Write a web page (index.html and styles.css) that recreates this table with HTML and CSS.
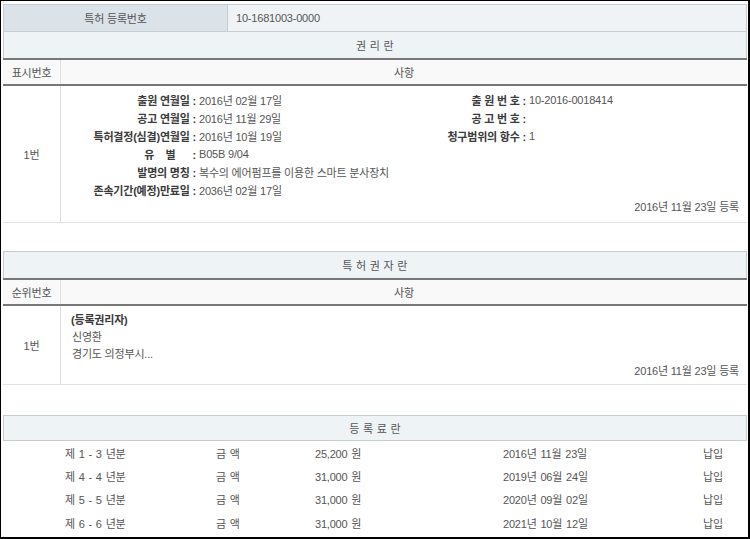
FILE: index.html
```html
<!DOCTYPE html>
<html lang="ko">
<head>
<meta charset="utf-8">
<title>특허 등록원부</title>
<link rel="stylesheet" href="styles.css">
</head>
<body>
<div class="frame">
  <div class="regno">
    <div class="regno-key">특허 등록번호</div>
    <div class="regno-val">10-1681003-0000</div>
  </div>
  <div class="sec-title">권 리 란</div>
  <div class="colhead">
    <div class="c1">표시번호</div>
    <div class="c2">사항</div>
  </div>
  <div class="body-row rights">
    <div class="c1">1번</div>
    <div class="c2">
      <div class="info">
        <div class="lbl">출원 연월일 :</div><div class="val">2016년 02월 17일</div>
        <div class="lbl">출 원 번 호 :</div><div class="val">10-2016-0018414</div>
        <div class="lbl">공고 연월일 :</div><div class="val">2016년 11월 29일</div>
        <div class="lbl">공 고 번 호 :</div><div class="val"></div>
        <div class="lbl">특허결정(심결)연월일 :</div><div class="val">2016년 10월 19일</div>
        <div class="lbl">청구범위의 항수 :</div><div class="val">1</div>
        <div class="lbl">유&nbsp;&nbsp;&nbsp;&nbsp;별&nbsp;&nbsp;&nbsp;&nbsp;&nbsp;&nbsp;:</div><div class="val wide">B05B 9/04</div>
        <div class="lbl">발명의 명칭 :</div><div class="val wide">복수의 에어펌프를 이용한 스마트 분사장치</div>
        <div class="lbl">존속기간(예정)만료일 :</div><div class="val wide">2036년 02월 17일</div>
      </div>
      <div class="reg">2016년 11월 23일 등록</div>
    </div>
  </div>

  <div class="sec-title sec-gap">특 허 권 자 란</div>
  <div class="colhead">
    <div class="c1">순위번호</div>
    <div class="c2">사항</div>
  </div>
  <div class="body-row holder">
    <div class="c1">1번</div>
    <div class="c2">
      <div class="holder-kind">(등록권리자)</div>
      <div class="holder-line">신영환</div>
      <div class="holder-line">경기도 의정부시...</div>
      <div class="reg">2016년 11월 23일 등록</div>
    </div>
  </div>

  <div class="sec-title fee-title">등 록 료 란</div>
  <div class="fees">
    <div class="fee-row"><span>제 1 - 3 년분</span><span>금 액</span><span>25,200 원</span><span>2016년 11월 23일</span><span>납입</span></div>
    <div class="fee-row"><span>제 4 - 4 년분</span><span>금 액</span><span>31,000 원</span><span>2019년 06월 24일</span><span>납입</span></div>
    <div class="fee-row"><span>제 5 - 5 년분</span><span>금 액</span><span>31,000 원</span><span>2020년 09월 02일</span><span>납입</span></div>
    <div class="fee-row"><span>제 6 - 6 년분</span><span>금 액</span><span>31,000 원</span><span>2021년 10월 12일</span><span>납입</span></div>
  </div>
</div>
</body>
</html>
```
FILE: styles.css
```css
* { box-sizing: border-box; }
html, body { margin: 0; padding: 0; background: #fff; }
body {
  font-family: "Liberation Sans", "Noto Sans CJK KR", sans-serif;
  font-size: 11px;
  letter-spacing: -0.2px;
  color: #555;
}
.frame {
  width: 750px;
  height: 539px;
  overflow: hidden;
  border: 1px solid #000;
  border-right-width: 2px;
  border-bottom-width: 2px;
  padding: 3px 1px 0 2px;
}
.regno {
  display: flex;
  height: 28px;
  border: 1px solid #c5ced3;
}
.regno-key {
  width: 224px;
  background: #dce3e8;
  border-right: 1px solid #c5ced3;
  display: flex;
  align-items: center;
  justify-content: center;
  color: #555;
}
.regno-val {
  flex: 1;
  background: #eff3f5;
  display: flex;
  align-items: center;
  padding-left: 8px;
  color: #555;
}
.sec-title {
  height: 26px;
  background: #eef3f6;
  border-left: 1px solid #c5ced3;
  border-right: 1px solid #c5ced3;
  display: flex;
  align-items: center;
  justify-content: center;
  color: #555;
  letter-spacing: 0.3px;
}
.sec-gap {
  margin-top: 28px;
  height: 27px;
  border-top: 1px solid #c5ced3;
}
.colhead {
  display: flex;
  height: 28px;
  background: #f9f9f9;
  border-top: 2px solid #777;
  border-bottom: 2px solid #777;
}
.colhead .c1, .colhead .c2 {
  display: flex;
  align-items: center;
  justify-content: center;
}
.c1 {
  width: 58px;
  flex: none;
  border-right: 1px solid #ddd;
}
.c2 { flex: 1; }
.body-row {
  display: flex;
  border-bottom: 1px solid #e2e2e2;
  color: #444;
}
.body-row .c1 {
  display: flex;
  align-items: center;
  justify-content: center;
  color: #555;
}
.rights { height: 137px; }
.rights .c2 { padding: 5px 8px 0 0; }
.info {
  display: grid;
  grid-template-columns: 135px 195px 129px 1fr;
  column-gap: 3px;
  grid-auto-rows: 18px;
  align-items: center;
}
.lbl {
  text-align: right;
  font-weight: bold;
  color: #3a3a3a;
  white-space: nowrap;
}
.val { white-space: nowrap; color: #555; }
.val.wide { grid-column: 2 / 5; }
.reg {
  text-align: right;
  line-height: 17px;
  color: #555;
}
.holder { height: 79px; }
.holder .c2 { padding: 6px 8px 0 10px; line-height: 17px; }
.holder-kind { font-weight: bold; color: #3a3a3a; }
.holder-line { padding-left: 1px; color: #555; }
.fee-title {
  margin-top: 30px;
  height: 26px;
  border: 1px solid #c5ced3;
}
.fees { padding-left: 62px; }
.fee-row {
  display: grid;
  grid-template-columns: 151px 99px 188px 200px 1fr;
  height: 23.4px;
  align-items: center;
  color: #555;
  word-spacing: 1px;
}
.fee-row span { white-space: nowrap; }
```
